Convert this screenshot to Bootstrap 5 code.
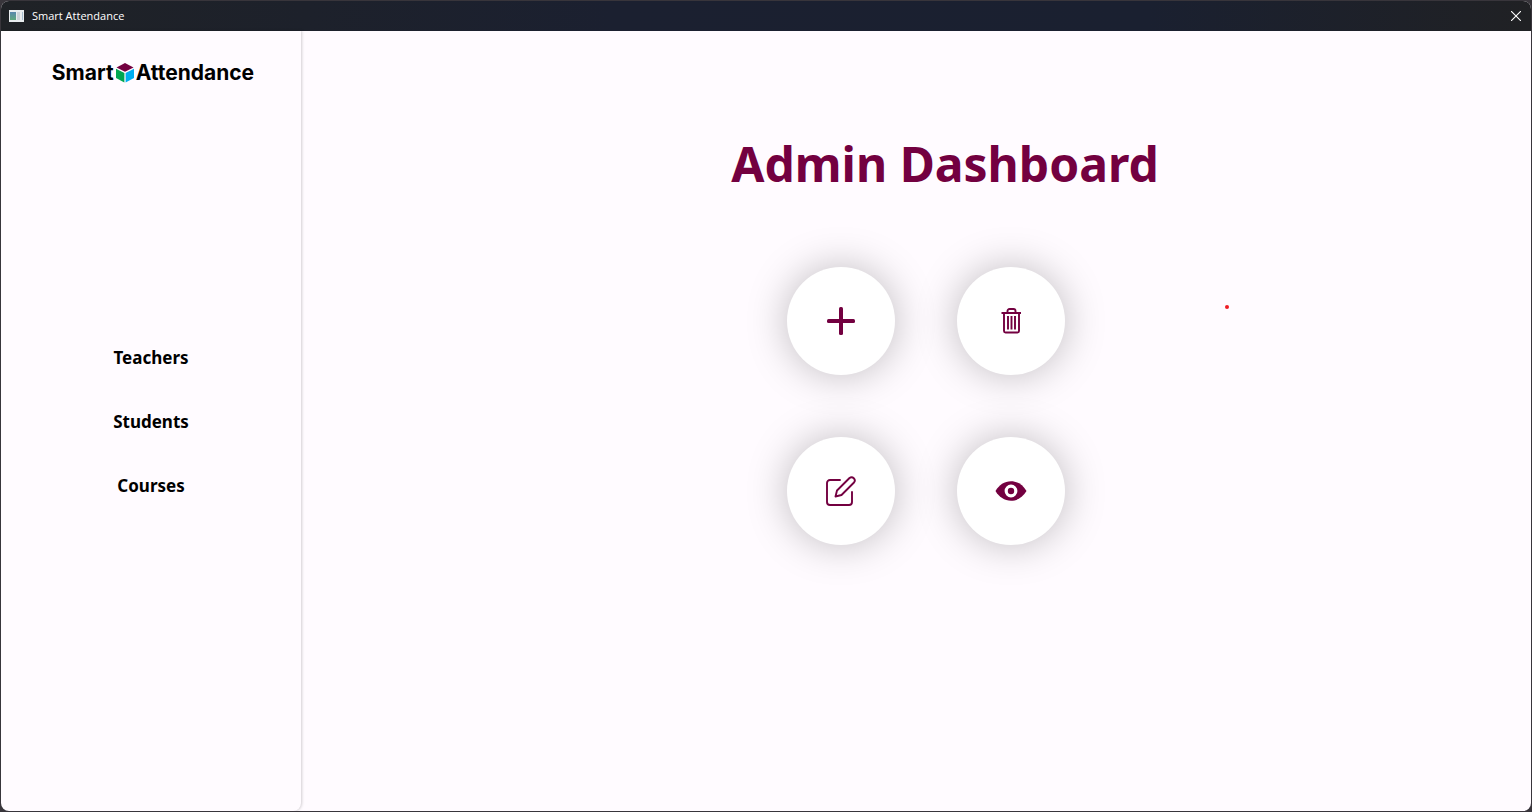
<!DOCTYPE html>
<html lang="en">
<head>
<meta charset="utf-8">
<meta name="viewport" content="width=device-width, initial-scale=1">
<title>Smart Attendance</title>
<link rel="stylesheet" href="https://cdn.jsdelivr.net/npm/bootstrap@5.3.0/dist/css/bootstrap.min.css">
<style>
:root { --plum: #730040; --paper: #fffbff; }
body { background: #38353b; font-family: "Open Sans", "Noto Sans", sans-serif; }
.app-window { background: var(--paper); border-radius: 8px; margin: 1px; min-height: calc(100vh - 2px); }
.title-bar { height: 30px; background: linear-gradient(90deg, #1f2226, #1b2030 40%, #1a2030 75%, #202124); color: #fff; font-size: 11px; }
.close-btn { width: 30px; height: 30px; }
.side-panel { width: 300px; border-radius: 0 0 8px 8px; box-shadow: 1px 0 3px rgba(0, 0, 0, .18); }
.brand-row { font-family: "Inter", "Liberation Sans", sans-serif; font-variant-ligatures: none; font-size: 21px; line-height: 24px; padding-top: 30px; padding-left: 4px; gap: 2px; }
.side-link { font-family: "Noto Sans", sans-serif; font-size: 17px; line-height: 24px; }
.side-menu { gap: 40px; padding-top: 237px; padding-bottom: 40px; }
.stage { padding-left: 20px; padding-top: 97px; }
.stage-title { color: var(--plum); font-family: "Noto Sans", sans-serif; font-size: 48px; line-height: 72px; padding-left: 38px; margin-bottom: 67px; }
.action-grid { display: grid; grid-template-columns: repeat(2, 108px); gap: 62px; }
.action-btn { width: 108px; height: 108px; background: #fff; color: var(--plum); box-shadow: 0 0 40px rgba(0, 0, 0, .26); }
.marker { left: 1224px; top: 304px; width: 4px; height: 4px; background: #ee1c24; }
</style>
</head>
<body>
<div class="app-window d-flex flex-column overflow-hidden position-relative">
  <header class="title-bar d-flex align-items-center justify-content-between">
    <div class="d-flex align-items-center ps-2">
      <svg width="15" height="12" viewBox="0 0 15 12" aria-hidden="true"><defs><linearGradient id="pane" x2="0" y2="1"><stop stop-color="#5a87ae"/><stop offset="1" stop-color="#5fa87c"/></linearGradient></defs><path fill="#e9edef" d="M0 0h15v12H0z"/><path fill="url(#pane)" d="M1 2h6v8H1z"/><path fill="#cdd3d8" d="M8 2h3v8H8z"/><path fill="#a9bfd0" d="M13 2h1v8h-1z"/></svg>
      <span class="ms-2">Smart Attendance</span>
    </div>
    <button type="button" class="close-btn btn border-0 p-0 text-white d-flex align-items-center justify-content-center" aria-label="Close">
      <svg width="10" height="10" viewBox="0 0 10 10" stroke="currentColor" stroke-width="1.1"><path d="M0 0l10 10M10 0L0 10"/></svg>
    </button>
  </header>
  <div class="d-flex flex-grow-1">
    <aside class="side-panel flex-shrink-0">
      <div class="brand-row d-flex justify-content-center align-items-center fw-bold text-black">
        <span>Smart</span>
        <svg width="18" height="20" viewBox="0 0 18 20" aria-hidden="true"><path fill="#730040" d="M9 0l8.500 4.400L9 8.800.5 4.400z"/><path fill="#00a651" d="M0 5.700l8.400 4.400v9.400L0 15z"/><path fill="#00aeef" d="M18 5.700l-8.400 4.400v9.400L18 15z"/></svg>
        <span>Attendance</span>
      </div>
      <nav class="side-menu d-flex flex-column align-items-center mt-4" aria-label="Records">
        <a class="side-link fw-bold text-black text-decoration-none" href="#teachers">Teachers</a>
        <a class="side-link fw-bold text-black text-decoration-none" href="#students">Students</a>
        <a class="side-link fw-bold text-black text-decoration-none" href="#courses">Courses</a>
      </nav>
    </aside>
    <main class="stage flex-grow-1 d-flex flex-column align-items-center">
      <h1 class="stage-title fw-bold">Admin Dashboard</h1>
      <div class="action-grid">
        <button type="button" class="action-btn btn border-0 rounded-circle p-0 d-flex align-items-center justify-content-center" aria-label="Add">
          <svg width="28" height="28" viewBox="0 0 28 28" fill="currentColor"><rect x="12" width="4" height="28" rx="1.500"/><rect y="12" width="28" height="4" rx="1.500"/></svg>
        </button>
        <button type="button" class="action-btn btn border-0 rounded-circle p-0 d-flex align-items-center justify-content-center" aria-label="Delete">
          <svg width="20" height="26" viewBox="0 0 20 26" fill="none" stroke="currentColor" stroke-width="1.900"><path d="M.5 5h19.500M3 5v18a1.500 1.500 0 0 0 1.500 1.500h12a1.500 1.500 0 0 0 1.500-1.500V5M6.500 5V3a2 2 0 0 1 2-2h4a2 2 0 0 1 2 2v2M7 8v13.500M10.500 8v13.500M14 8v13.500"/></svg>
        </button>
        <button type="button" class="action-btn btn border-0 rounded-circle p-0 d-flex align-items-center justify-content-center" aria-label="Edit">
          <svg width="30" height="30" viewBox="0 0 30 30" fill="none" stroke="currentColor" stroke-width="1.900" stroke-linejoin="round" stroke-linecap="round"><path d="M14 4H4a3 3 0 0 0-3 3v19a3 3 0 0 0 3 3h19a3 3 0 0 0 3-3V16M9.500 20.500l1.500-6L23.500 2a3.200 3.200 0 0 1 4.500 4.500L15.500 19z"/></svg>
        </button>
        <button type="button" class="action-btn btn border-0 rounded-circle p-0 d-flex align-items-center justify-content-center" aria-label="View">
          <svg width="32" height="20" viewBox="0 0 32 20"><path fill="currentColor" d="M.5 10C4 4 9.500.3 16 .3S28 4 31.500 10C28 16 22.500 19.700 16 19.700S4 16 .5 10z"/><circle cx="16" cy="10" r="4.800" fill="currentColor" stroke="#fff" stroke-width="3.200"/></svg>
        </button>
      </div>
    </main>
  </div>
  <span class="marker position-absolute rounded-circle" aria-hidden="true"></span>
</div>
<script src="https://cdn.jsdelivr.net/npm/bootstrap@5.3.0/dist/js/bootstrap.bundle.min.js"></script>
</body>
</html>
